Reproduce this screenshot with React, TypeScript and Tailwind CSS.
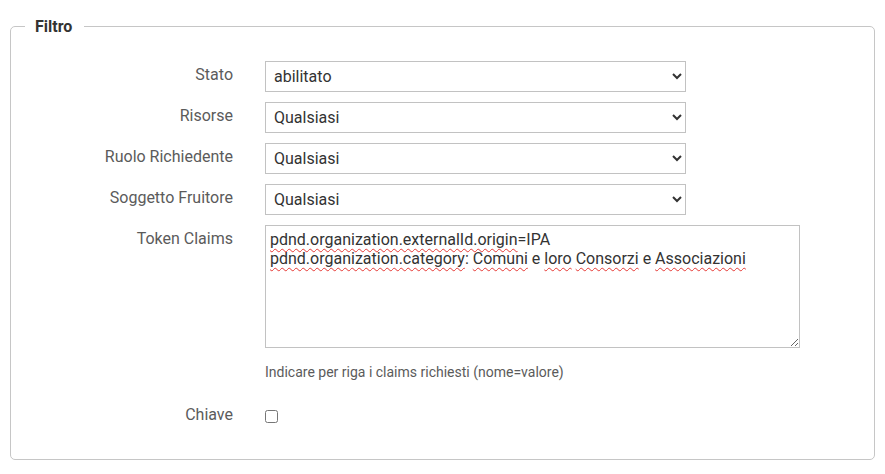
const labelCls = "w-[204px] shrink-0 text-right pt-[4px] leading-[20px] text-[16px] text-[#5b5b5b]";
const selectCls =
  "ml-[32px] w-[421px] h-[31px] border border-[#c2c2c2] bg-white px-[4px] text-[16px] text-[#333]";

const SelectRow = ({ label, value }: { label: string; value: string }) => (
  <div className="flex items-start">
    <div className={labelCls}>{label}</div>
    <select className={selectCls} defaultValue={value}>
      <option>{value}</option>
    </select>
  </div>
);

const Sp = ({ children }: { children: React.ReactNode }) => (
  <span className="underline decoration-wavy decoration-[#e53935] decoration-1 underline-offset-[3px]">
    {children}
  </span>
);

const App = () => {
  return (
    <div className="w-[885px] h-[474px] bg-white pt-[17px] font-['Roboto',sans-serif]">
      <fieldset className="mx-[10px] border border-[#c6c6c6] rounded-[5px] px-[18px] pb-[34px]">
        <legend className="-ml-[4px] pl-[10px] pr-[12px] text-[16px] leading-[19px] font-bold text-[#333]">
          Filtro
        </legend>
        <div className="flex flex-col gap-[10px] pt-[25px]">
          <SelectRow label="Stato" value="abilitato" />
          <SelectRow label="Risorse" value="Qualsiasi" />
          <SelectRow label="Ruolo Richiedente" value="Qualsiasi" />
          <SelectRow label="Soggetto Fruitore" value="Qualsiasi" />
          <div className="flex items-start">
            <div className={labelCls}>Token Claims</div>
            <div className="ml-[32px]">
              <div className="w-[535px] h-[123px] border border-[#c2c2c2] px-[4px] py-[4px] text-[16px] leading-[19px] text-[#333] resize overflow-auto">
                <div>
                  <Sp>pdnd.organization.externalId.origin</Sp>=IPA
                </div>
                <div>
                  <Sp>pdnd.organization.category</Sp>: <Sp>Comuni</Sp> e <Sp>loro</Sp>{" "}
                  <Sp>Consorzi</Sp> e <Sp>Associazioni</Sp>
                </div>
              </div>
              <p className="mt-[14px] text-[14px] leading-[20px] text-[#5b5b5b]">
                Indicare per riga i claims richiesti (nome=valore)
              </p>
            </div>
          </div>
          <div className="flex items-center mt-[13px]">
            <div className="w-[204px] shrink-0 text-right leading-[20px] text-[16px] text-[#5b5b5b]">Chiave</div>
            <input type="checkbox" className="ml-[32px] w-[13px] h-[13px] mt-[2px]" />
          </div>
        </div>
      </fieldset>
    </div>
  );
};

export default App;
